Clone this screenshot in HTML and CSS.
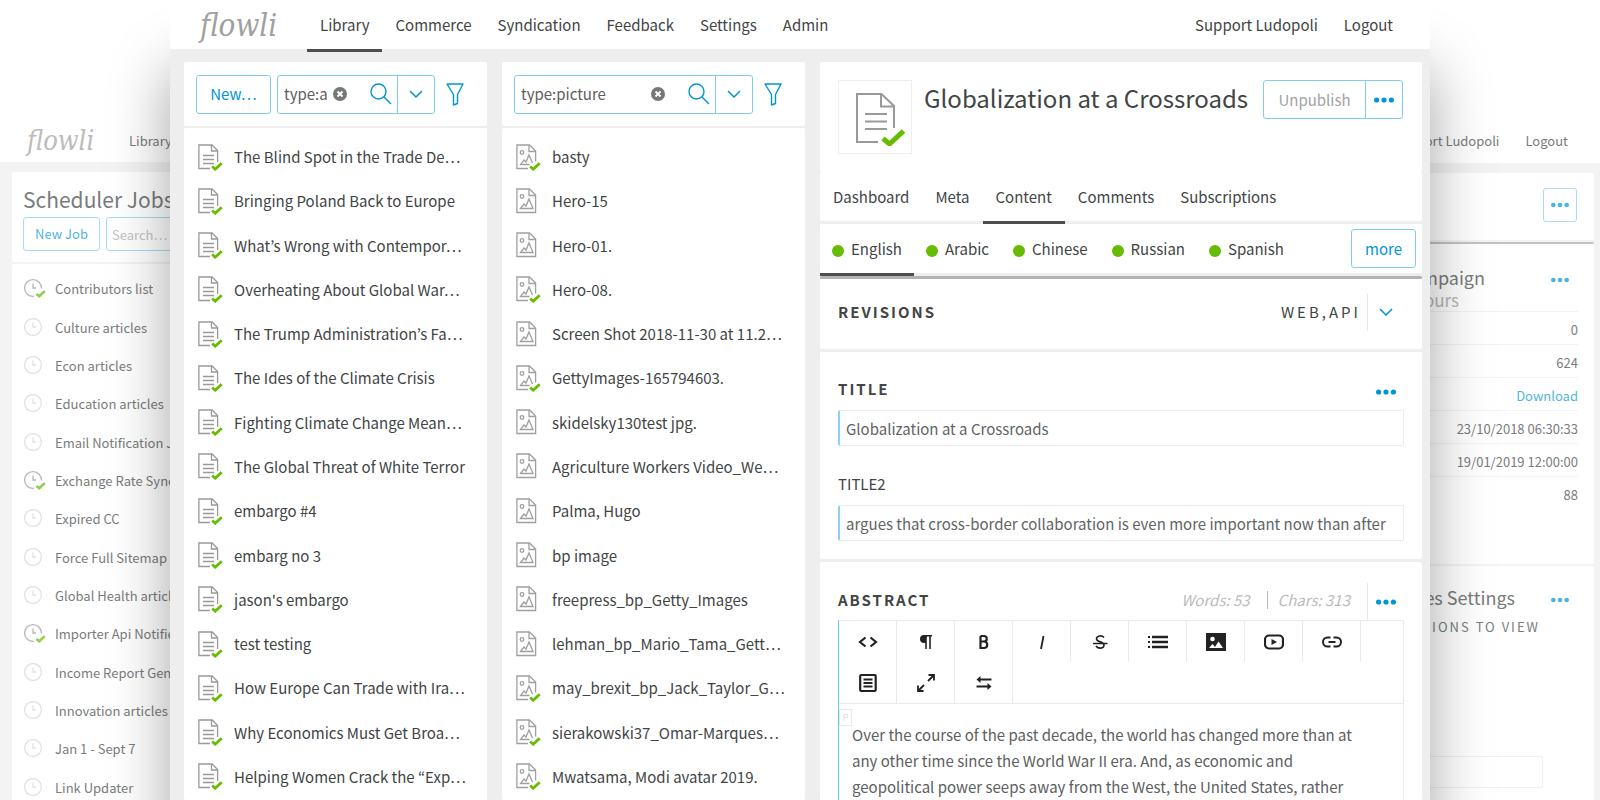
FILE: index.html
```html
<!DOCTYPE html>
<html lang="en">
<head>
<meta charset="utf-8">
<title>flowli – Library</title>
<link rel="stylesheet" href="styles.css">
</head>
<body>
<svg class="sprite" aria-hidden="true">
  <symbol id="doc" viewBox="0 0 25 27"><g fill="none" stroke="#999" stroke-width="1.3"><path d="M12 24.500H.9V1h13.200l5.500 5.500v11.500"/><path d="M13.500 1v6h6"/><path d="M5 11.500h11M5 15.500h11M5 19.500h11"/></g><path d="M14.200 22.500l3 2.700 6.500-6" fill="none" stroke="#65bc00" stroke-width="2.800"/></symbol>
  <symbol id="pic" viewBox="0 0 25 27"><g fill="none" stroke="#a0a0a0" stroke-width="1.300"><path d="M.9 24.500V1h12.600l6.100 6v17.500z"/><path d="M13 1v6.500h6.500"/><circle cx="6" cy="8.500" r="1.800"/><path d="M4.500 20.500l3.500-4.500 2 2 3-7 4 9.500z"/></g></symbol>
  <symbol id="picok" viewBox="0 0 25 27"><g fill="none" stroke="#a0a0a0" stroke-width="1.300"><path d="M12 24.500H.9V1h12.600l6.100 6v10.500"/><path d="M13 1v6.500h6.500"/><circle cx="6" cy="8.500" r="1.800"/><path d="M13.500 20.500h-9l3.500-4.500 2 2 3-7 3.500 8"/></g><path d="M14.200 22.500l3 2.700 6.500-6" fill="none" stroke="#65bc00" stroke-width="2.800"/></symbol>
  <symbol id="clock" viewBox="0 0 22 20"><g fill="none" stroke="#d6d6d6" stroke-width="1.300"><circle cx="9" cy="9" r="8.400"/><path d="M9 4.500V9h3"/></g></symbol>
  <symbol id="clockok" viewBox="0 0 22 20"><g fill="none" stroke="#999" stroke-width="1.300"><path d="M10 17.400A8.400 8.400 0 1 1 17.400 9.500"/><path d="M9 4.500V9h3"/></g><path d="M12.500 15l2.700 2.300 5.600-5.200" fill="none" stroke="#65bc00" stroke-width="2.600"/></symbol>
  <symbol id="search" viewBox="0 0 22 22"><g fill="none" stroke="#0095d5" stroke-width="1.400"><circle cx="8.500" cy="8.500" r="7.500"/><path d="M14 14l7 7"/></g></symbol>
  <symbol id="down" viewBox="0 0 14 8"><path d="M1 1l6 6 6-6" fill="none" stroke="#0095d5" stroke-width="1.500"/></symbol>
  <symbol id="filter" viewBox="0 0 18 23"><path d="M1 1h16l-5.500 10.500v9l-4 1.500v-10.500z" fill="none" stroke="#0095d5" stroke-width="1.400" stroke-linejoin="round"/></symbol>
  <symbol id="clear" viewBox="0 0 14 14"><circle cx="7" cy="7" r="7" fill="#757878"/><path d="M4.500 4.500l5 5m0-5l-5 5" stroke="#fff" stroke-width="1.800"/></symbol>
  <symbol id="dots" viewBox="0 0 20 6"><g fill="#0095d5"><circle cx="2.600" cy="3" r="2.600"/><circle cx="10" cy="3" r="2.600"/><circle cx="17.400" cy="3" r="2.600"/></g></symbol>
</svg>

<div class="stage">

  <section class="window back back-left" aria-label="Scheduler">
    <header class="bar"><span class="logo">flowli</span><nav class="nav"><a href="#">Library</a></nav></header>
    <div class="back-body">
      <div class="card job-head">
        <h2>Scheduler Jobs</h2>
        <div class="job-tools"><button class="btn">New Job</button><input class="job-search" type="text" placeholder="Search…" aria-label="Search jobs"></div>
      </div>
      <ul class="card rows jobs">
        <li><svg><use href="#clockok"/></svg>Contributors list</li>
        <li><svg><use href="#clock"/></svg>Culture articles</li>
        <li><svg><use href="#clock"/></svg>Econ articles</li>
        <li><svg><use href="#clock"/></svg>Education articles</li>
        <li><svg><use href="#clock"/></svg>Email Notification Jobs</li>
        <li><svg><use href="#clockok"/></svg>Exchange Rate Sync</li>
        <li><svg><use href="#clock"/></svg>Expired CC</li>
        <li><svg><use href="#clock"/></svg>Force Full Sitemap</li>
        <li><svg><use href="#clock"/></svg>Global Health articles</li>
        <li><svg><use href="#clockok"/></svg>Importer Api Notifier</li>
        <li><svg><use href="#clock"/></svg>Income Report Generator</li>
        <li><svg><use href="#clock"/></svg>Innovation articles</li>
        <li><svg><use href="#clock"/></svg>Jan 1 - Sept 7</li>
        <li><svg><use href="#clock"/></svg>Link Updater</li>
      </ul>
    </div>
  </section>

  <section class="window back back-right" aria-label="Campaign">
    <header class="bar"><nav class="nav"><a href="#">Support Ludopoli</a><a href="#">Logout</a></nav></header>
    <div class="back-body">
      <div class="card camp-head"><button class="btn square" aria-label="More"><svg class="dots"><use href="#dots"/></svg></button></div>
      <div class="card camp">
        <div class="camp-title"><h3>Campaign</h3><button class="plain" aria-label="Campaign menu"><svg class="dots"><use href="#dots"/></svg></button></div>
        <p class="camp-sub">24 hours</p>
        <ul class="facts">
          <li>0</li><li>624</li><li><a href="#">Download</a></li><li>23/10/2018 06:30:33</li><li>19/01/2019 12:00:00</li><li>88</li>
        </ul>
      </div>
      <div class="card sets">
        <div class="camp-title"><h3>Services Settings</h3><button class="plain" aria-label="Settings menu"><svg class="dots"><use href="#dots"/></svg></button></div>
        <p class="caps">OPTIONS TO VIEW</p>
        <input class="field" type="text" aria-label="Option">
      </div>
    </div>
  </section>

  <main class="window front">
    <header class="bar">
      <span class="logo">flowli</span>
      <nav class="nav"><a href="#" class="on">Library</a><a href="#">Commerce</a><a href="#">Syndication</a><a href="#">Feedback</a><a href="#">Settings</a><a href="#">Admin</a></nav>
      <nav class="nav user"><a href="#">Support Ludopoli</a><a href="#">Logout</a></nav>
    </header>
    <div class="cols">
      <section class="col">
        <div class="card tools">
          <button class="btn">New…</button>
          <div class="group"><input type="text" value="type:article" aria-label="Search articles"><button class="plain" aria-label="Clear"><svg class="clear"><use href="#clear"/></svg></button><button class="plain go" aria-label="Search"><svg class="mag"><use href="#search"/></svg></button><button class="drop" aria-label="Search options"><svg class="down"><use href="#down"/></svg></button></div>
          <button class="plain" aria-label="Filter"><svg class="filter"><use href="#filter"/></svg></button>
        </div>
        <ul class="card rows">
          <li><svg><use href="#doc"/></svg>The Blind Spot in the Trade De…</li>
          <li><svg><use href="#doc"/></svg>Bringing Poland Back to Europe</li>
          <li><svg><use href="#doc"/></svg>What’s Wrong with Contempor…</li>
          <li><svg><use href="#doc"/></svg>Overheating About Global War…</li>
          <li><svg><use href="#doc"/></svg>The Trump Administration’s Fa…</li>
          <li><svg><use href="#doc"/></svg>The Ides of the Climate Crisis</li>
          <li><svg><use href="#doc"/></svg>Fighting Climate Change Mean…</li>
          <li><svg><use href="#doc"/></svg>The Global Threat of White Terror</li>
          <li><svg><use href="#doc"/></svg>embargo #4</li>
          <li><svg><use href="#doc"/></svg>embarg no 3</li>
          <li><svg><use href="#doc"/></svg>jason's embargo</li>
          <li><svg><use href="#doc"/></svg>test testing</li>
          <li><svg><use href="#doc"/></svg>How Europe Can Trade with Ira…</li>
          <li><svg><use href="#doc"/></svg>Why Economics Must Get Broa…</li>
          <li><svg><use href="#doc"/></svg>Helping Women Crack the “Exp…</li>
        </ul>
      </section>

      <section class="col">
        <div class="card tools">
          <div class="group wide"><input type="text" value="type:picture" aria-label="Search pictures"><button class="plain" aria-label="Clear"><svg class="clear"><use href="#clear"/></svg></button><button class="plain go" aria-label="Search"><svg class="mag"><use href="#search"/></svg></button><button class="drop" aria-label="Search options"><svg class="down"><use href="#down"/></svg></button></div>
          <button class="plain" aria-label="Filter"><svg class="filter"><use href="#filter"/></svg></button>
        </div>
        <ul class="card rows">
          <li><svg><use href="#picok"/></svg>basty</li>
          <li><svg><use href="#pic"/></svg>Hero-15</li>
          <li><svg><use href="#pic"/></svg>Hero-01.</li>
          <li><svg><use href="#picok"/></svg>Hero-08.</li>
          <li><svg><use href="#pic"/></svg>Screen Shot 2018-11-30 at 11.2…</li>
          <li><svg><use href="#picok"/></svg>GettyImages-165794603.</li>
          <li><svg><use href="#pic"/></svg>skidelsky130test jpg.</li>
          <li><svg><use href="#pic"/></svg>Agriculture Workers Video_We…</li>
          <li><svg><use href="#pic"/></svg>Palma, Hugo</li>
          <li><svg><use href="#pic"/></svg>bp image</li>
          <li><svg><use href="#pic"/></svg>freepress_bp_Getty_Images</li>
          <li><svg><use href="#pic"/></svg>lehman_bp_Mario_Tama_Gett…</li>
          <li><svg><use href="#picok"/></svg>may_brexit_bp_Jack_Taylor_G…</li>
          <li><svg><use href="#picok"/></svg>sierakowski37_Omar-Marques…</li>
          <li><svg><use href="#picok"/></svg>Mwatsama, Modi avatar 2019.</li>
        </ul>
      </section>

      <section class="col detail">
        <div class="card head">
          <div class="thumb"><svg viewBox="0 0 50 54"><g fill="none" stroke="#999" stroke-width="2"><path d="M23 50H2V2h24.500l12.500 12v22"/><path d="M26 2v12.500h13" /><path d="M10 22h22M10 29.500h22M10 37h22"/></g><path d="M28 46.500l6.500 5.500 14-13" fill="none" stroke="#65bc00" stroke-width="5"/></svg></div>
          <h1>Globalization at a Crossroads</h1>
          <div class="pair"><button class="off" disabled>Unpublish</button><button class="drop" aria-label="More actions"><svg class="dots"><use href="#dots"/></svg></button></div>
        </div>
        <nav class="card nav tabs"><a href="#">Dashboard</a><a href="#">Meta</a><a href="#" class="on">Content</a><a href="#">Comments</a><a href="#">Subscriptions</a></nav>
        <div class="card langs">
          <nav class="nav"><a href="#" class="on">English</a><a href="#">Arabic</a><a href="#">Chinese</a><a href="#">Russian</a><a href="#">Spanish</a></nav>
          <button class="btn">more</button>
        </div>
        <div class="card rev">
          <h2 class="label">REVISIONS</h2><span class="chan">WEB,API</span>
          <button class="plain side" aria-label="Expand revisions"><svg class="down"><use href="#down"/></svg></button>
        </div>
        <div class="card titles">
          <div class="line"><label class="label" for="t1">TITLE</label><button class="plain" aria-label="Title menu"><svg class="dots"><use href="#dots"/></svg></button></div>
          <input class="field" id="t1" type="text" value="Globalization at a Crossroads">
          <label class="sub" for="t2">TITLE2</label>
          <input class="field" id="t2" type="text" value="argues that cross-border collaboration is even more important now than after">
        </div>
        <div class="card abstract">
          <div class="line"><h2 class="label">ABSTRACT</h2><span class="count">Words: 53</span><span class="count bar-left">Chars: 313</span><button class="plain side" aria-label="Abstract menu"><svg class="dots"><use href="#dots"/></svg></button></div>
          <div class="editor">
            <div class="keys">
              <button aria-label="Source"><svg viewBox="0 0 20 20"><path d="M7.500 5.500L2 10l5.500 4.500M12.500 5.500L18 10l-5.500 4.500" fill="none" stroke="#222" stroke-width="2.200"/></svg></button>
              <button aria-label="Paragraph"><svg viewBox="0 0 20 20"><path d="M10 3v14M14 3v14M16 3.700H9" fill="none" stroke="#222" stroke-width="1.600"/><path d="M10 3H8a4 4 0 0 0 0 8h2z" fill="#222"/></svg></button>
              <button aria-label="Bold"><svg viewBox="0 0 20 20"><path d="M6.500 4v12h4a3.300 3.300 0 0 0 0-6.500h-4m3.500 0a2.700 2.700 0 0 0 0-5.500H6.500" fill="none" stroke="#222" stroke-width="2.200"/></svg></button>
              <button aria-label="Italic"><svg viewBox="0 0 20 20"><path d="M11.500 4L9 17" stroke="#222" stroke-width="1.800"/></svg></button>
              <button aria-label="Strike"><svg viewBox="0 0 20 20"><path d="M14 5.500C12 3 6.500 3.500 6.500 6.700c0 4 7.500 2.300 7.500 6.300 0 4-6 4-8 1M3 11.500h14.500" fill="none" stroke="#222" stroke-width="1.600"/></svg></button>
              <button aria-label="List"><svg viewBox="0 0 20 20"><path d="M4 5h16M4 10h16M4 15h16" stroke="#222" stroke-width="2.400"/><path d="M0 5h2M0 10h2M0 15h2" stroke="#222" stroke-width="2"/></svg></button>
              <button aria-label="Image"><svg viewBox="0 0 20 20"><path d="M0 1h20v18H0z" fill="#222"/><circle cx="6.500" cy="7" r="2.300" fill="#fff"/><path d="M3 16l3.500-4 2.500 3 3.500-5.500L17 16z" fill="#fff"/></svg></button>
              <button aria-label="Video"><svg viewBox="0 0 20 20"><rect x="1" y="3.500" width="18" height="13" rx="4" fill="none" stroke="#222" stroke-width="2.200"/><path d="M7.500 7l5.500 3-5.500 3z" fill="#222"/></svg></button>
              <button aria-label="Link"><svg viewBox="0 0 20 20"><path d="M8.500 14.500H5.500a4.500 4.500 0 0 1 0-9h3M11.500 5.500h3a4.500 4.500 0 0 1 0 9h-3M6.500 10h7" fill="none" stroke="#222" stroke-width="2"/></svg></button>
              <button aria-label="Block"><svg viewBox="0 0 20 20"><rect x="2.200" y="2" width="15.500" height="16" rx="1" fill="none" stroke="#222" stroke-width="2.200"/><path d="M5.500 6.500h9M5.500 10h9M5.500 13.500h9" stroke="#222" stroke-width="1.800"/></svg></button>
              <button aria-label="Full screen"><svg viewBox="0 0 20 20"><path d="M12 8l6-6M8 12l-6 6M12.500 2H18v5.500M2 12.500V18h5.500" fill="none" stroke="#222" stroke-width="1.800"/></svg></button>
              <button aria-label="Swap"><svg viewBox="0 0 20 20"><path d="M4 6.500h13.500M2.500 13.500H16" stroke="#222" stroke-width="2.200"/><path d="M6.500 3v7l-4-3.500zM13.500 10v7l4-3.500z" fill="#222"/></svg></button>
            </div>
            <div class="text"><span class="tag">P</span><p>Over the course of the past decade, the world has changed more than at any other time since the World War II era. And, as economic and geopolitical power seeps away from the West, the United States, rather</p></div>
          </div>
        </div>
      </section>
    </div>
  </main>
</div>
</body>
</html>
```
FILE: styles.css
```css
* { box-sizing: border-box; }
html { background: #fff; }
body { margin: 0; font: 15px/24px "Noto Sans CJK KR", "Noto Sans", sans-serif; color: #414545; }
h1, h2, h3, p, ul { margin: 0; padding: 0; list-style: none; font-weight: 400; }
a { color: inherit; text-decoration: none; }
button, input { font: inherit; color: inherit; margin: 0; border-radius: 0; }
button { background: none; border: 0; padding: 0; }
svg { display: block; flex: none; }
.sprite { position: absolute; width: 0; height: 0; }

.stage { display: grid; grid-template: minmax(0, 1fr) / 170px minmax(0, 1fr) 170px; height: 100vh; overflow: hidden; }
.window { display: flex; flex-direction: column; min-width: 0; }
.bar { display: flex; align-items: center; background: #fff; }
.logo { font: italic 31px/40px "DejaVu Serif Condensed", "DejaVu Serif", serif; color: #a0a0a0; }
.nav { display: flex; }
.nav a { position: relative; padding: 0 13px; white-space: nowrap; }
.nav .on::after { content: ""; position: absolute; left: 0; right: 0; bottom: -3px; height: 3px; background: #4a4e4e; }
.card { background: #fff; border-radius: 2px; }

/* front window */
.front { grid-area: 1 / 2; z-index: 1; background: #eee; box-shadow: 0 70px 56px rgba(0, 0, 0, .36); }
.front > .bar { height: 49px; padding: 0 24px 0 30px; flex: none; }
.front > .bar .nav { line-height: 49px; }
.front .logo { width: 107px; }
.user { margin-left: auto; }
.cols { flex: 1; min-height: 0; display: grid; grid-template-columns: minmax(0, 303fr) minmax(0, 303fr) minmax(0, 602fr); gap: 15px; padding: 13px 8px 0 14px; }
.col { display: flex; flex-direction: column; gap: 2px; min-height: 0; }

.tools { display: flex; align-items: center; padding: 12px; height: 64px; gap: 11px; }
.btn { border: 1px solid #7fceee; border-radius: 3px; color: #0095d5; height: 39px; padding: 0 13px; }
.tools .btn { width: 75px; margin-right: -5px; }
.group { display: flex; align-items: center; height: 39px; width: 158px; border: 1px solid #7fceee; border-radius: 3px; }
.group.wide { width: 239px; }
.group input { flex: 1; min-width: 0; border: 0; padding: 0; margin: 0 6px; background: none; color: #5c6060; }
.go { margin: 0 5px 0 23px; }
.drop { display: grid; place-items: center; align-self: stretch; width: 37px; border-left: 1px solid #7fceee; }
.clear { width: 14px; height: 14px; }
.mag { width: 22px; height: 22px; }
.down { width: 14px; height: 8px; }
.filter { width: 18px; height: 23px; }
.dots { width: 20px; height: 6px; }

.rows { flex: 1; display: flex; flex-direction: column; padding: 7px 0 1px 14px; }
.rows li { flex: 1; display: flex; align-items: center; gap: 11px; white-space: nowrap; }
.rows svg { width: 25px; height: 27px; }

/* detail column */
.detail { gap: 0; }
.head { display: flex; align-items: flex-start; height: 110px; padding: 18px 19px 0 18px; }
.thumb { display: grid; place-items: center; width: 74px; height: 74px; border: 1px solid #eee; padding: 4px 0 0 9px; }
.thumb svg { width: 50px; height: 54px; }
h1 { flex: 1; font-size: 24px; line-height: 36px; padding-left: 12px; white-space: nowrap; }
.pair { display: flex; height: 39px; border: 1px solid #7fceee; border-radius: 3px; }
.pair .off { width: 101px; color: #a0a3a3; }
.tabs { line-height: 50px; height: 49px; }
.langs { display: flex; justify-content: space-between; align-items: center; height: 49px; margin-top: 3px; padding-right: 6px; }
.langs .nav { line-height: 49px; height: 49px; }
.langs .nav a { padding: 0 12px; }
.langs .nav a::before { content: ""; display: inline-block; width: 12px; height: 12px; margin-right: 7px; border-radius: 50%; background: #65bc00; vertical-align: -2px; }
.rev { display: flex; align-items: center; margin-top: 3px; height: 73px; padding: 0 18px 4px; border-top: 3px solid #b3b3b3; }
.label { flex: 1; font-size: 15px; font-weight: 700; letter-spacing: 2px; }
.chan { letter-spacing: 3px; margin-right: 6px; }
.side { display: grid; place-items: center; width: 37px; height: 37px; border-left: 1px solid #e8e8e8; }
.titles { margin-top: 3px; padding: 25px 18px 18px; }
.line { display: flex; align-items: center; }
.titles .line { padding-right: 8px; margin-bottom: 9px; }
.titles .dots { margin-top: 6px; }
.field { display: block; width: 100%; height: 36px; border: 1px solid #eaeaea; border-left: 2px solid #8ad2f0; border-radius: 2px; padding: 0 6px; background: #fff; color: #606464; }
.sub { display: block; margin: 26px 0 9px; }
.abstract { flex: 1; margin-top: 3px; padding: 21px 18px 0; display: flex; flex-direction: column; min-height: 0; }
.abstract .label, .count { margin-bottom: 4px; }
.count { font-style: italic; color: #bbb; margin-right: 17px; }
.bar-left { border-left: 1px solid #bbb; padding-left: 10px; line-height: 18px; }
.editor { flex: 1; border: 1px solid #eaeaea; border-left-color: #6cc6ec; }
.keys { display: flex; flex-wrap: wrap; border-bottom: 1px solid #eaeaea; }
.keys button { display: grid; place-items: center; width: 58px; height: 41px; border-right: 1px solid #eaeaea; }
.keys svg { width: 20px; height: 20px; }
.text { position: relative; padding: 18px 30px 0 13px; line-height: 26px; color: #5c6060; }
.tag { position: absolute; left: 0; top: 5px; width: 13px; height: 17px; border: 1px solid #e8e8e8; font-size: 9px; line-height: 15px; text-align: center; color: #ddd; }

/* windows behind */
.back { grid-row: 1; margin: 115px 0 -8px; font-size: 13px; opacity: .7; }
.back-left { grid-column: 1 / 3; }
.back-right { grid-column: 2 / 4; }
.back > .bar { height: 47px; flex: none; padding: 4px 19px 0 27px; }
.back .logo { font-size: 27px; width: 89px; }
.back-right > .bar { height: 48px; justify-content: flex-end; }
.back-body { flex: 1; display: flex; flex-direction: column; gap: 2px; background: #eee; padding: 10px 6px 0 12px; }
.job-head { height: 90px; padding: 13px 11px 0; }
.job-head h2 { font-size: 21px; line-height: 28px; }
.job-tools { display: flex; gap: 6px; margin-top: 4px; }
.back .btn { height: 34px; width: 77px; padding: 0; }
.job-search { height: 34px; border: 1px solid #7fceee; border-radius: 3px; padding: 0 5px; }
.job-search::placeholder { color: #aaa; opacity: 1; }
.jobs { padding: 6px 0 1px 12px; }
.jobs li { gap: 9px; }
.jobs svg { width: 22px; height: 20px; }
.camp-head { height: 67px; padding: 15px 17px; display: flex; justify-content: flex-end; }
.back .square { width: 34px; display: grid; place-items: center; }
.back .dots { width: 18px; height: 6px; }
.camp { height: 322px; padding: 21px 16px 0; border-top: 2px solid #aaa; }
.camp-title { display: flex; justify-content: flex-end; align-items: center; padding-right: 9px; gap: 66px; }
.camp-title .dots { margin-top: 6px; }
.camp h3, .sets h3 { font-size: 18px; }
.camp-sub { color: #999; font-size: 17px; line-height: 22px; text-align: right; padding-right: 119px; }
.facts { text-align: right; }
.facts li { height: 33px; line-height: 36px; border-top: 1px solid #eee; }
.facts a { color: #0095d5; }
.sets { flex: 1; padding: 19px 16px 0; }
.sets .camp-title { gap: 36px; }
.caps { letter-spacing: 2px; text-align: right; padding-right: 38px; margin-top: 6px; }
.sets .field { width: 50%; height: 32px; margin: 117px 35px 0 auto; border-left-width: 1px; border-color: #eaeaea; }
```
